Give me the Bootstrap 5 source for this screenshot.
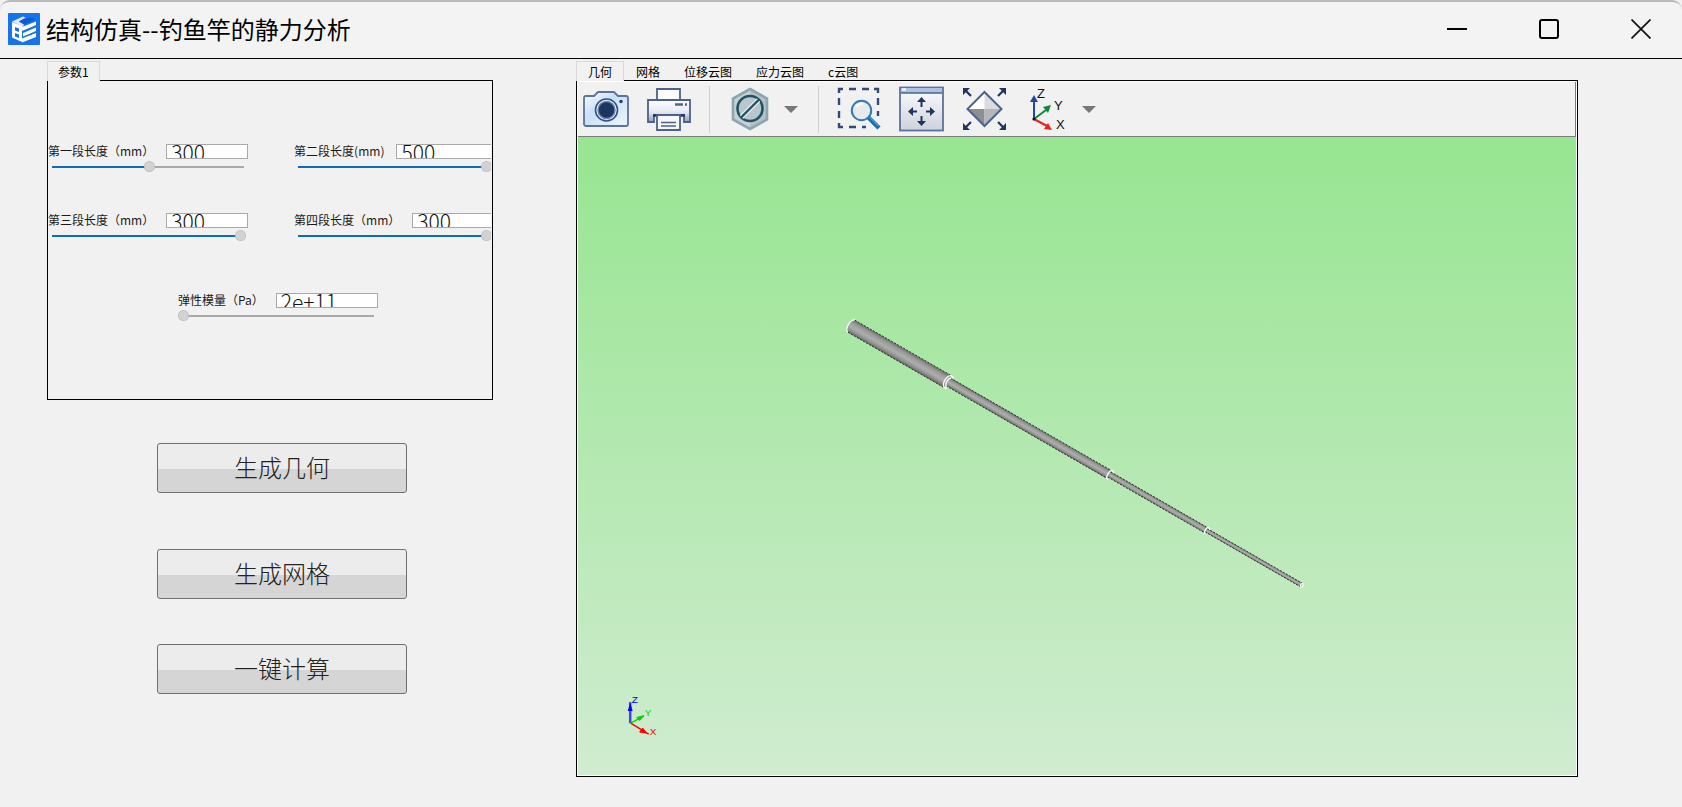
<!DOCTYPE html>
<html lang="zh-CN">
<head>
<meta charset="utf-8">
<meta name="viewport" content="width=device-width, initial-scale=1">
<title>结构仿真--钓鱼竿的静力分析</title>
<link href="https://cdn.jsdelivr.net/npm/bootstrap@5.3.0/dist/css/bootstrap.min.css" rel="stylesheet">
<style>
  body { font-family: "Liberation Sans", "Noto Sans CJK SC", sans-serif; background: #f1f1f1; color: #000; font-size: 12px; line-height: 18px; }
  svg { display: block; }
  .titlebar { height: 59px; background: #f3f3f3; border-top: 2px solid #b9b9b9; border-bottom: 1px solid #000; border-radius: 10px 10px 0 0; padding: 0 21px 2px 8px; }
  .titlebar h1 { font: 400 24px/32px "Noto Sans CJK SC", sans-serif; margin: 0 0 0 6px; }
  .win-controls { gap: 52px; }
  .win-controls .btn { width: 40px; height: 40px; }
  .workspace { display: grid; grid-template-columns: minmax(0, 446fr) minmax(0, 1002fr); column-gap: 83px; padding: 2px 104px 30px 47px; }
  .panel-tabs { border: 0; height: 19px; font-family: "Noto Sans CJK SC", sans-serif; }
  .panel-tabs .nav-link { border: 1px solid transparent; border-bottom: 0; border-radius: 0; color: #000; padding: 1px 11px 0; line-height: 18px; height: 19px; margin: 0; }
  .panel-tabs .nav-link.active { color: #000; background: #f1f1f1; border-color: #d9d9d9; height: 20px; position: relative; z-index: 1; }
  .panel-tabs .nav-link.compact { padding: 1px 10px 0; }
  .framed { border: 1px solid #000; }
  .param-panel { padding: 0 1px 0 0; }
  .param-clip { overflow: hidden; padding: 63px 0 77px; }
  .param-grid { display: grid; grid-template-columns: 5fr 4fr; row-gap: 40px; }
  .param-grid > div { min-width: 0; }
  .field-line { height: 15px; gap: 12px; font-family: "Noto Sans CJK SC", sans-serif; white-space: nowrap; }
  .field-line label { line-height: 13px; color: #1a1a1a; }
  .field-line .form-control { width: 82px; height: 15px; min-height: 0; flex: none; padding: 1px 4px; border: 1px solid #a9a9a9; border-radius: 0; background: #fff; color: #111; font: 300 21px/11px "Noto Sans CJK SC", sans-serif; }
  .field-line .form-control.wide { width: 102px; }
  .slide { appearance: none; -webkit-appearance: none; display: block; width: 194px; height: 11px; margin: 2px 0 1px 4px; padding: 0; background: linear-gradient(90deg, #0f6cbd var(--fill), #a9a9a9 var(--fill)) no-repeat 0 5px / calc(100% - 2px) 2px; }
  .slide.flush { margin-left: 0; width: 198px; }
  .slide::-webkit-slider-thumb { -webkit-appearance: none; width: 11px; height: 11px; border-radius: 50%; background: #d2d2d2; border: 1px dotted #b0b0b0; }
  .modulus { margin: 51px 0 0 130px; }
  .actions { padding: 43px 86px 0 110px; }
  .btn-action { height: 50px; padding: 0 0 2px; border: 1px solid #707070; border-radius: 3px; background: linear-gradient(#ececec 52%, #d5d5d5 52%); color: #222; font: 300 24px/44px "Noto Sans CJK SC", sans-serif; }
  .btn-action:hover, .btn-action:active { background: linear-gradient(#ececec 52%, #d5d5d5 52%) !important; color: #222; border-color: #707070; }
  .action-gap-lg { margin-top: 56px; }
  .action-gap-sm { margin-top: 45px; }
  .view-panel { padding: 1px; background: #fff; }
  .tool-row { height: 55px; background: #f1f1f1; border-right: 1px solid #7a7a7a; border-bottom: 1px solid #7a7a7a; padding-left: 5px; gap: 17px; }
  .tool-row .btn { padding: 0; border: 0; border-radius: 0; }
  .rule { width: 1px; height: 47px; background: #cfcfcf; }
  .with-arrow { gap: 11px; padding-right: 3px; }
  .viewport { background: linear-gradient(#97e591, #d0ecd0); min-height: 300px; }
</style>
</head>
<body>
<div class="d-flex flex-column min-vh-100">
  <header class="titlebar d-flex align-items-center">
    <svg width="32" height="32" viewBox="0 0 32 32" aria-hidden="true">
      <rect width="32" height="32" rx="1" fill="#1673ea"/>
      <path d="M4 8.500L15 3.500l3 1.500-7 3.500 5 2.500-1 3z" fill="#dfeafa"/>
      <path d="M16 5.500l7-1 4 2-11 5-5-3z" fill="#0d5bd6"/>
      <path d="M4 9l10 4v16L4 24.500z" fill="#fff"/>
      <path d="M7 14l4 1.500V19l-4-1.500zM7 20l4 1.500V25l-4-1.500z" fill="#1673ea"/>
      <path d="M14 14l14-5.500v3.500l-14 6zM15 20l13-5.500V18l-13 5.500zM14 25.500L28 20v4l-14 5.500z" fill="#fff"/>
    </svg>
    <h1>结构仿真--钓鱼竿的静力分析</h1>
    <div class="win-controls d-flex ms-auto">
      <button class="btn p-0 border-0 d-flex align-items-center justify-content-center" type="button" aria-label="最小化"><svg width="20" height="20"><path d="M0 10h20" stroke="#000" stroke-width="2"/></svg></button>
      <button class="btn p-0 border-0 d-flex align-items-center justify-content-center" type="button" aria-label="最大化"><svg width="20" height="20"><rect x="1" y="1" width="18" height="18" rx="2" fill="none" stroke="#000" stroke-width="2"/></svg></button>
      <button class="btn p-0 border-0 d-flex align-items-center justify-content-center" type="button" aria-label="关闭"><svg width="20" height="20"><path d="M.5.5l19 19M19.500.5l-19 19" stroke="#111" stroke-width="1.700"/></svg></button>
    </div>
  </header>

  <main class="workspace flex-grow-1">
    <section class="d-flex flex-column">
      <ul class="nav nav-tabs panel-tabs">
        <li class="nav-item"><a class="nav-link active compact" href="#params">参数1</a></li>
      </ul>
      <div class="framed param-panel" id="params">
        <div class="param-clip">
          <div class="param-grid">
            <div>
              <div class="field-line d-flex"><label for="len1">第一段长度（mm）</label><input class="form-control" id="len1" type="text" value="300"></div>
              <input class="slide" type="range" aria-label="第一段长度" value="50" style="--fill:50%">
            </div>
            <div>
              <div class="field-line d-flex"><label for="len2">第二段长度(mm)</label><input class="form-control wide" id="len2" type="text" value="500"></div>
              <input class="slide" type="range" aria-label="第二段长度" value="100" style="--fill:100%">
            </div>
            <div>
              <div class="field-line d-flex"><label for="len3">第三段长度（mm）</label><input class="form-control" id="len3" type="text" value="300"></div>
              <input class="slide" type="range" aria-label="第三段长度" value="100" style="--fill:100%">
            </div>
            <div>
              <div class="field-line d-flex"><label for="len4">第四段长度（mm）</label><input class="form-control wide" id="len4" type="text" value="300"></div>
              <input class="slide" type="range" aria-label="第四段长度" value="100" style="--fill:100%">
            </div>
          </div>
          <div class="modulus">
            <div class="field-line d-flex"><label for="mod">弹性模量（Pa）</label><input class="form-control wide" id="mod" type="text" value="2e+11"></div>
            <input class="slide flush" type="range" aria-label="弹性模量" value="0" style="--fill:0%">
          </div>
        </div>
      </div>
      <div class="actions d-flex flex-column">
        <button class="btn btn-action" type="button">生成几何</button>
        <button class="btn btn-action action-gap-lg" type="button">生成网格</button>
        <button class="btn btn-action action-gap-sm" type="button">一键计算</button>
      </div>
    </section>

    <section class="d-flex flex-column">
      <ul class="nav nav-tabs panel-tabs">
        <li class="nav-item"><a class="nav-link active" href="#view">几何</a></li>
        <li class="nav-item"><a class="nav-link" href="#view">网格</a></li>
        <li class="nav-item"><a class="nav-link" href="#view">位移云图</a></li>
        <li class="nav-item"><a class="nav-link" href="#view">应力云图</a></li>
        <li class="nav-item"><a class="nav-link" href="#view">c云图</a></li>
      </ul>
      <div class="framed view-panel flex-grow-1 d-flex flex-column" id="view">
        <div class="tool-row d-flex align-items-center" role="toolbar" aria-label="视图工具">
          <button class="btn" type="button" aria-label="截图">
            <svg width="46" height="46" viewBox="0 0 46 46">
              <defs><linearGradient id="cam" x1="0" y1="0" x2="1" y2="1"><stop offset="0" stop-color="#fff"/><stop offset=".4" stop-color="#c9dff5"/><stop offset="1" stop-color="#eef5fc"/></linearGradient></defs>
              <path d="M3 10h8l4-4h16l4 4h8a2 2 0 0 1 2 2v26a2 2 0 0 1-2 2H3a2 2 0 0 1-2-2V12a2 2 0 0 1 2-2z" fill="url(#cam)" stroke="#5b7299" stroke-width="1.800"/>
              <circle cx="23.500" cy="24" r="11" fill="#e8f0f9" stroke="#34507f" stroke-width="1.600"/>
              <circle cx="23.500" cy="24" r="8.500" fill="#1c3561" stroke="#6d87ab" stroke-width="1.500"/>
              <circle cx="38" cy="15.500" r="1.800" fill="#28426f"/>
            </svg>
          </button>
          <button class="btn" type="button" aria-label="打印">
            <svg width="46" height="46" viewBox="0 0 46 46">
              <defs><linearGradient id="prn" x1="0" y1="0" x2="0" y2="1"><stop offset="0" stop-color="#fff"/><stop offset=".55" stop-color="#e4e8f1"/><stop offset="1" stop-color="#8e9cb9"/></linearGradient></defs>
              <path d="M11 14V3h23v11" fill="#fdfdfe" stroke="#4c628c" stroke-width="1.800"/>
              <path d="M2 14h42v22h-6V29H8v7H2z" fill="url(#prn)" stroke="#4c628c" stroke-width="1.800"/>
              <path d="M29 18.500h8M39 18.500h2" stroke="#506388" stroke-width="2.400"/>
              <path d="M7 29.500h32" stroke="#22365f" stroke-width="2.500"/>
              <path d="M11 29h23v15H11z" fill="#f6f7fa" stroke="#4c628c" stroke-width="1.800"/>
              <path d="M15 36.500h15M15 40h15" stroke="#4c628c" stroke-width="1.600"/>
            </svg>
          </button>
          <span class="rule"></span>
          <div class="with-arrow d-flex align-items-center">
            <button class="btn" type="button" aria-label="无选择">
              <svg width="46" height="46" viewBox="0 0 46 46">
                <path d="M23 3l17 9.500v21L23 43 6 33.500v-21z" fill="#c7d1d5" stroke="#8aa7af" stroke-width="2.600"/>
                <path d="M23 3v40l17-9.500v-21z" fill="#91a3ab" opacity=".35"/>
                <circle cx="23" cy="22.500" r="12.500" fill="#bac6cd" stroke="#1f5366" stroke-width="2.600"/>
                <path d="M14.500 31L31.500 14" stroke="#e6edf0" stroke-width="5"/>
                <path d="M14 31.500L32 13.500" stroke="#1f5366" stroke-width="2.400"/>
              </svg>
            </button>
            <button class="btn" type="button" aria-label="选择选项"><svg width="14" height="8"><path d="M0 1h14L7 8z" fill="#777"/></svg></button>
          </div>
          <span class="rule"></span>
          <button class="btn" type="button" aria-label="框选缩放">
            <svg width="46" height="46" viewBox="0 0 46 46">
              <path d="M3 7V3h4M13 3h7M26 3h7M38 3h4v4M3 12v7M3 25v7M42 12v7M42 25v5M3 37v4h4M13 41h7M26 41h4" fill="none" stroke="#334a76" stroke-width="2.400"/>
              <circle cx="25.500" cy="24.500" r="9.700" fill="#e6e9ee" stroke="#2f7bb4" stroke-width="2"/>
              <path d="M20 21a7 7 0 0 1 7-3" stroke="#fff" stroke-width="2" fill="none"/>
              <path d="M32.500 31.500L43 42" stroke="#1c6fae" stroke-width="4.500"/><path d="M33.500 31l9 9" stroke="#69b5e6" stroke-width="1"/>
            </svg>
          </button>
          <button class="btn" type="button" aria-label="平移">
            <svg width="46" height="46" viewBox="0 0 46 46">
              <defs><linearGradient id="win" x1="0" y1="0" x2="0" y2="1"><stop offset="0" stop-color="#fcfcfd"/><stop offset="1" stop-color="#cdd2dc"/></linearGradient></defs>
              <rect x="1" y="1.500" width="43" height="43" fill="url(#win)" stroke="#5b709a" stroke-width="1.800"/>
              <rect x="2" y="2" width="41" height="5" fill="#a9c3e3"/><path d="M3 3.500h4" stroke="#fff" stroke-width="2"/><path d="M2 7h41" stroke="#4c638f" stroke-width="1.500"/>
              <path d="M22.500 21v-7M22.500 30v7M18 25.500h-6M27 25.500h6" stroke="#1f3560" stroke-width="2"/>
              <path d="M22.500 11l4.500 5h-9zM22.500 40l4.500-5h-9zM9 25.500l5-4.500v9zM36 25.500l-5-4.500v9z" fill="#1f3560"/>
            </svg>
          </button>
          <button class="btn" type="button" aria-label="适应窗口">
            <svg width="46" height="46" viewBox="0 0 46 46">
              <path d="M22.500 6L39.500 23H5.500z" fill="#dcdcdd"/><path d="M22.500 6v17h-17z" fill="#fff"/><path d="M5.500 23h17v17z" fill="#8c8e92"/><path d="M22.500 23h17l-17 17z" fill="#b4b6b9"/>
              <path d="M22.500 6l17 17-17 17-17-17z" fill="none" stroke="#4a628e" stroke-width="2"/>
              <path d="M4 5l5 5M41 5l-5 5M4 41l5-5M41 41l-5-5" stroke="#1f3560" stroke-width="2.200"/>
              <path d="M1 2h7l-7 7zM44 2h-7l7 7zM1 44h7l-7-7zM44 44h-7l7-7z" fill="#1f3560"/>
            </svg>
          </button>
          <div class="with-arrow d-flex align-items-center">
            <button class="btn" type="button" aria-label="视图方向">
              <svg width="46" height="46" viewBox="0 0 46 46">
                <path d="M9 33V13" stroke="#2346a5" stroke-width="2"/><path d="M9 9l4 7H5z" fill="#2346a5"/>
                <path d="M9 33l12-9" stroke="#0d8a3c" stroke-width="2"/><path d="M26 19l-3 8-5-6z" fill="#0d8a3c"/>
                <path d="M9 33l13 7" stroke="#e8221c" stroke-width="2"/><path d="M27 44l-8-1 4-6z" fill="#e8221c"/>
                <circle cx="9" cy="33" r="1.600" fill="#111"/>
                <g font-family="Liberation Sans, sans-serif" font-size="13" fill="#111"><text x="12" y="12">Z</text><text x="29" y="24">Y</text><text x="31" y="43">X</text></g>
              </svg>
            </button>
            <button class="btn" type="button" aria-label="视图选项"><svg width="14" height="8"><path d="M0 1h14L7 8z" fill="#777"/></svg></button>
          </div>
        </div>
        <div class="viewport flex-grow-1 position-relative">
          <svg class="position-absolute top-0 start-0 w-100 h-100" viewBox="578 137 998 639" preserveAspectRatio="xMidYMid meet" role="img" aria-label="钓鱼竿模型">
            <defs>
              <linearGradient id="rod" x1="0" y1="0" x2="0" y2="1"><stop offset="0" stop-color="#6a6a6a"/><stop offset=".25" stop-color="#999"/><stop offset=".55" stop-color="#aeaeae"/><stop offset=".8" stop-color="#919191"/><stop offset="1" stop-color="#606060"/></linearGradient>
            </defs>
            <g transform="translate(851 326.500) rotate(29.900)">
              <rect x="409" y="-2" width="112" height="4" fill="url(#rod)"/>
              <rect x="297" y="-3" width="113" height="6" fill="url(#rod)"/>
              <rect x="110" y="-4.500" width="188" height="9" fill="url(#rod)"/>
              <path d="M0-7H111V7H0a3 7 0 0 1 0-14z" fill="url(#rod)"/>
              <path d="M0-7H112M0 7H110M112-4.500H298M112 4.500H298M298-3H410M298 3H410M410-2H520M410 2H520" stroke="#222" stroke-width=".8" stroke-dasharray="2 1.500" fill="none"/>
              <g fill="none" stroke="#fff" stroke-width="1.300">
                <path d="M0-7a3.500 7 0 0 0 0 14"/>
                <path d="M112-7a4 7 0 0 0 0 14M113-4.500a2.500 4.500 0 0 0 0 9M112-7l3 1M112 7l2-1"/>
                <path d="M299-5a2.500 5 0 0 0 0 10M299-5l2 1"/>
                <path d="M411-3.500a2 3.500 0 0 0 0 7M411-3.500l2 1"/>
                <ellipse cx="520.500" cy="0" rx="1.200" ry="2"/>
              </g>
            </g>
            <g font-family="Liberation Sans, sans-serif" font-size="10">
              <path d="M629.500 724V703" stroke="#4343e8" stroke-width="2.500"/><path d="M629.500 704l2.500 8h-5z" fill="#00f"/>
              <path d="M630 724l13-7" stroke="#00d900" stroke-width="1.500"/><path d="M643 716.500l-4 5-3-3z" fill="#00d900" stroke="#00d900"/>
              <path d="M630 724l18 11" stroke="#f00" stroke-width="1.500"/><path d="M646 734l-7-1 3-4z" fill="#f00" stroke="#f00"/>
              <text x="631" y="704" fill="#00f">Z</text><text x="644" y="717" fill="#00d900">Y</text><text x="649" y="736" fill="#f00">X</text>
            </g>
          </svg>
        </div>
      </div>
    </section>
  </main>
</div>
<script src="https://cdn.jsdelivr.net/npm/bootstrap@5.3.0/dist/js/bootstrap.bundle.min.js"></script>
</body>
</html>
